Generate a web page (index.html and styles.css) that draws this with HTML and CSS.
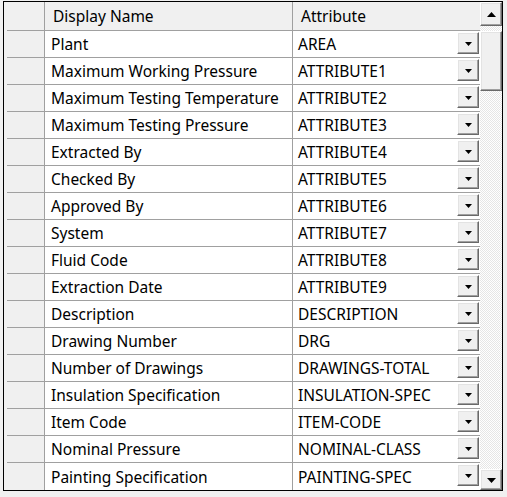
FILE: index.html
```html
<!DOCTYPE html>
<html>
<head>
<meta charset="utf-8">
<link rel="stylesheet" href="styles.css">
</head>
<body>
<div class="grid-box">
  <div class="table">
    <div class="row head">
      <div class="rh"></div>
      <div class="cell name">Display Name</div>
      <div class="cell attr">Attribute</div>
    </div>
    <div class="row"><div class="rh"></div><div class="cell name">Plant</div><div class="cell attr"><span class="val">AREA</span><span class="dd"><svg width="7" height="4" viewBox="0 0 7 4"><polygon points="0,0 7,0 3.5,4" fill="#000"/></svg></span></div></div>
    <div class="row"><div class="rh"></div><div class="cell name">Maximum Working Pressure</div><div class="cell attr"><span class="val">ATTRIBUTE1</span><span class="dd"><svg width="7" height="4" viewBox="0 0 7 4"><polygon points="0,0 7,0 3.5,4" fill="#000"/></svg></span></div></div>
    <div class="row"><div class="rh"></div><div class="cell name">Maximum Testing Temperature</div><div class="cell attr"><span class="val">ATTRIBUTE2</span><span class="dd"><svg width="7" height="4" viewBox="0 0 7 4"><polygon points="0,0 7,0 3.5,4" fill="#000"/></svg></span></div></div>
    <div class="row"><div class="rh"></div><div class="cell name">Maximum Testing Pressure</div><div class="cell attr"><span class="val">ATTRIBUTE3</span><span class="dd"><svg width="7" height="4" viewBox="0 0 7 4"><polygon points="0,0 7,0 3.5,4" fill="#000"/></svg></span></div></div>
    <div class="row"><div class="rh"></div><div class="cell name">Extracted By</div><div class="cell attr"><span class="val">ATTRIBUTE4</span><span class="dd"><svg width="7" height="4" viewBox="0 0 7 4"><polygon points="0,0 7,0 3.5,4" fill="#000"/></svg></span></div></div>
    <div class="row"><div class="rh"></div><div class="cell name">Checked By</div><div class="cell attr"><span class="val">ATTRIBUTE5</span><span class="dd"><svg width="7" height="4" viewBox="0 0 7 4"><polygon points="0,0 7,0 3.5,4" fill="#000"/></svg></span></div></div>
    <div class="row"><div class="rh"></div><div class="cell name">Approved By</div><div class="cell attr"><span class="val">ATTRIBUTE6</span><span class="dd"><svg width="7" height="4" viewBox="0 0 7 4"><polygon points="0,0 7,0 3.5,4" fill="#000"/></svg></span></div></div>
    <div class="row"><div class="rh"></div><div class="cell name">System</div><div class="cell attr"><span class="val">ATTRIBUTE7</span><span class="dd"><svg width="7" height="4" viewBox="0 0 7 4"><polygon points="0,0 7,0 3.5,4" fill="#000"/></svg></span></div></div>
    <div class="row"><div class="rh"></div><div class="cell name">Fluid Code</div><div class="cell attr"><span class="val">ATTRIBUTE8</span><span class="dd"><svg width="7" height="4" viewBox="0 0 7 4"><polygon points="0,0 7,0 3.5,4" fill="#000"/></svg></span></div></div>
    <div class="row"><div class="rh"></div><div class="cell name">Extraction Date</div><div class="cell attr"><span class="val">ATTRIBUTE9</span><span class="dd"><svg width="7" height="4" viewBox="0 0 7 4"><polygon points="0,0 7,0 3.5,4" fill="#000"/></svg></span></div></div>
    <div class="row"><div class="rh"></div><div class="cell name">Description</div><div class="cell attr"><span class="val">DESCRIPTION</span><span class="dd"><svg width="7" height="4" viewBox="0 0 7 4"><polygon points="0,0 7,0 3.5,4" fill="#000"/></svg></span></div></div>
    <div class="row"><div class="rh"></div><div class="cell name">Drawing Number</div><div class="cell attr"><span class="val">DRG</span><span class="dd"><svg width="7" height="4" viewBox="0 0 7 4"><polygon points="0,0 7,0 3.5,4" fill="#000"/></svg></span></div></div>
    <div class="row"><div class="rh"></div><div class="cell name">Number of Drawings</div><div class="cell attr"><span class="val">DRAWINGS-TOTAL</span><span class="dd"><svg width="7" height="4" viewBox="0 0 7 4"><polygon points="0,0 7,0 3.5,4" fill="#000"/></svg></span></div></div>
    <div class="row"><div class="rh"></div><div class="cell name">Insulation Specification</div><div class="cell attr"><span class="val">INSULATION-SPEC</span><span class="dd"><svg width="7" height="4" viewBox="0 0 7 4"><polygon points="0,0 7,0 3.5,4" fill="#000"/></svg></span></div></div>
    <div class="row"><div class="rh"></div><div class="cell name">Item Code</div><div class="cell attr"><span class="val">ITEM-CODE</span><span class="dd"><svg width="7" height="4" viewBox="0 0 7 4"><polygon points="0,0 7,0 3.5,4" fill="#000"/></svg></span></div></div>
    <div class="row"><div class="rh"></div><div class="cell name">Nominal Pressure</div><div class="cell attr"><span class="val">NOMINAL-CLASS</span><span class="dd"><svg width="7" height="4" viewBox="0 0 7 4"><polygon points="0,0 7,0 3.5,4" fill="#000"/></svg></span></div></div>
    <div class="row"><div class="rh"></div><div class="cell name">Painting Specification</div><div class="cell attr"><span class="val">PAINTING-SPEC</span><span class="dd"><svg width="7" height="4" viewBox="0 0 7 4"><polygon points="0,0 7,0 3.5,4" fill="#000"/></svg></span></div></div>
  </div>
  <div class="vscroll">
    <div class="sbtn up"><svg width="9" height="5" viewBox="0 0 9 5"><polygon points="0,5 9,5 4.5,0" fill="#000"/></svg></div>
    <div class="track"><div class="thumb"></div></div>
    <div class="sbtn down"><svg width="9" height="5" viewBox="0 0 9 5"><polygon points="0,0 9,0 4.5,5" fill="#000"/></svg></div>
  </div>
</div>
</body>
</html>
```
FILE: styles.css
```css
html, body {
  margin: 0;
  padding: 0;
  background: #f0f0f0;
}
body {
  font-family: "Noto Sans", "Open Sans", sans-serif;
  font-size: 15.5px;
  color: #000;
}
.grid-box {
  box-sizing: border-box;
  margin: 1px 0 0 3px;
  width: 500px;
  height: 490px;
  border: 1px solid #000;
  display: flex;
  overflow: hidden;
  background: #fff;
}
.table {
  width: 476px;
  display: flex;
  flex-direction: column;
  overflow: hidden;
}
.row {
  display: grid;
  grid-template-columns: 41px 248px 187px;
  height: 27px;
  flex: none;
}
.row.head {
  height: 29px;
}
.rh {
  box-sizing: border-box;
  border-right: 1px solid #a0a0a0;
  background: linear-gradient(#a0a0a0, #a0a0a0) no-repeat left 3px bottom 0 / 37px 1px, #f0f0f0;
}
.cell {
  box-sizing: border-box;
  display: flex;
  align-items: center;
  border-bottom: 1px solid #a0a0a0;
  white-space: nowrap;
  overflow: hidden;
}
.cell.name {
  border-right: 1px solid #a0a0a0;
  padding-left: 6px;
}
.cell.attr {
  padding-left: 5px;
  padding-right: 1px;
}
.head .cell {
  background: #f0f0f0;
  padding-left: 8px;
}
.row:last-child .cell {
  border-bottom: none;
}
.row:last-child .rh {
  background: #f0f0f0;
}
.dd {
  box-sizing: border-box;
  margin-left: auto;
  align-self: flex-start;
  margin-top: 1px;
  width: 22px;
  height: 22px;
  background: #f0f0f0;
  border: 1px solid;
  border-color: #fff #696969 #696969 #fff;
  box-shadow: inset -1px -1px #a0a0a0, inset 1px 1px #e3e3e3;
  display: flex;
  align-items: center;
  justify-content: center;
  padding-top: 2px;
}
.dd svg { display: block; }
.vscroll {
  width: 22px;
  display: flex;
  flex-direction: column;
  background: conic-gradient(#fff 25%, #e6e6e6 0 50%, #fff 0 75%, #e6e6e6 0) 0 0 / 2px 2px;
}
.sbtn, .thumb {
  box-sizing: border-box;
  background: #f0f0f0;
  border: 1px solid;
  border-color: #fff #696969 #696969 #fff;
  box-shadow: inset -1px -1px #a0a0a0, inset 1px 1px #e3e3e3;
}
.sbtn {
  display: flex;
  align-items: center;
  justify-content: center;
  flex: none;
}
.sbtn svg { display: block; }
.sbtn.up { height: 24px; }
.sbtn.down { height: 21px; padding-top: 2px; }
.track {
  flex: 1;
  padding-top: 5px;
}
.thumb {
  height: 60px;
}
```
